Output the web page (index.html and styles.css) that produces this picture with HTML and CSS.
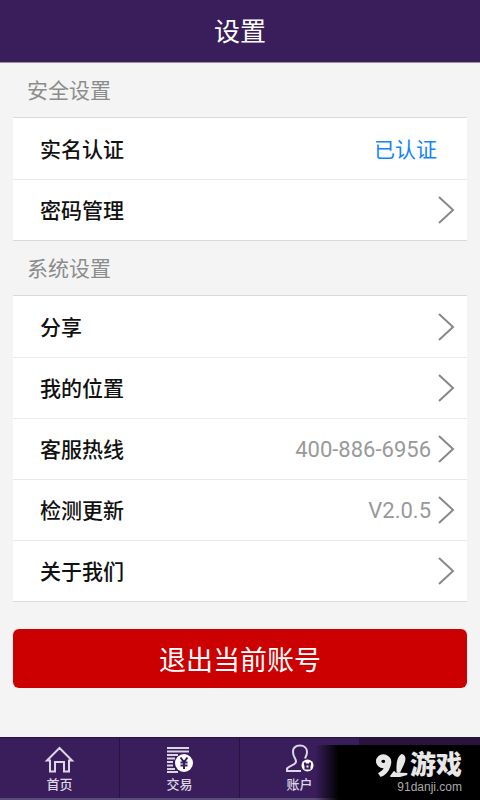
FILE: index.html
```html
<!DOCTYPE html>
<html lang="zh-CN">
<head>
<meta charset="utf-8">
<meta name="viewport" content="width=device-width, initial-scale=1">
<title>设置</title>
<link rel="stylesheet" href="styles.css">
</head>
<body>
<header class="topbar"><h1>设置</h1></header>
<main class="content">
  <h2 class="section">安全设置</h2>
  <ul class="group">
    <li><a class="row" href="#verify"><span class="label">实名认证</span><span class="status">已认证</span></a></li>
    <li><a class="row" href="#password"><span class="label">密码管理</span><svg class="chevron" viewBox="0 0 18 30"><path d="M2 2 16 15 2 28"/></svg></a></li>
  </ul>
  <h2 class="section">系统设置</h2>
  <ul class="group">
    <li><a class="row" href="#share"><span class="label">分享</span><svg class="chevron" viewBox="0 0 18 30"><path d="M2 2 16 15 2 28"/></svg></a></li>
    <li><a class="row" href="#location"><span class="label">我的位置</span><svg class="chevron" viewBox="0 0 18 30"><path d="M2 2 16 15 2 28"/></svg></a></li>
    <li><a class="row" href="#hotline"><span class="label">客服热线</span><span class="value">400-886-6956</span><svg class="chevron" viewBox="0 0 18 30"><path d="M2 2 16 15 2 28"/></svg></a></li>
    <li><a class="row" href="#update"><span class="label">检测更新</span><span class="value">V2.0.5</span><svg class="chevron" viewBox="0 0 18 30"><path d="M2 2 16 15 2 28"/></svg></a></li>
    <li><a class="row" href="#about"><span class="label">关于我们</span><svg class="chevron" viewBox="0 0 18 30"><path d="M2 2 16 15 2 28"/></svg></a></li>
  </ul>
  <button class="logout" type="button">退出当前账号</button>
</main>
<nav class="tabs">
  <a class="tab" href="#home">
    <svg class="icon" viewBox="0 0 30 30"><path d="M2 15.500 14.500 3 27 15.500H24V26.500H19V17H10V26.500H5V15.500Z"/></svg>
    <span>首页</span>
  </a>
  <a class="tab" href="#trade">
    <svg class="icon" viewBox="0 0 30 30"><path d="M2 3H24M2 6.500H24M2 10H13M2 13.500H10M2 17H8M2 20.500H8M2 24H10M2 27H13"/><circle class="solid" cx="19" cy="18" r="9"/><path class="yen" d="M15.500 12.500 19 17 22.500 12.500M19 17V24M15.500 17.500H22.500M15.500 20.500H22.500"/></svg>
    <span>交易</span>
  </a>
  <a class="tab" href="#account">
    <svg class="icon" viewBox="0 0 30 30"><path d="M16 26H2V23.500C5 20 11 20 11 16.500C11 13 8 12 8 7C8 2.500 11 0.500 15 0.500S22 3 22 7C22 10 21 11 20 13.500"/><circle class="solid" cx="22.500" cy="20.500" r="6"/><path class="yen" d="M20 17.500V19.500M25 17.500V19.500M19 19.500H26M20.500 20V23.500H24.500V20"/></svg>
    <span>账户</span>
  </a>
  <a class="tab tab-more" href="#more" aria-label="更多"></a>
  <div class="watermark">
    <div class="brand"><svg class="mark" viewBox="0 0 96 69" role="img" aria-label="91"><ellipse class="loop" cx="22" cy="22" rx="14" ry="13"/><path class="stem" d="M30 6C48 8 48 26 43 38C37 54 28 64 14 69L6 58C18 52 24 44 27 34Z"/><path class="stem" d="M78 0C92 4 90 20 82 35L72 56H62C60 34 62 6 78 0Z"/><path class="stem" d="M42 66 54 50 60 56H78L94 57V63L72 69H44Z"/></svg><strong>游戏</strong></div>
    <div class="site">91danji.com</div>
  </div>
</nav>
</body>
</html>
```
FILE: styles.css
```css
* { box-sizing: border-box; }
body {
  margin: 0;
  min-height: 100vh;
  display: flex;
  flex-direction: column;
  background: #f4f4f4;
  color: #111;
  font-family: Roboto, "Noto Sans CJK SC", sans-serif;
}
a { color: inherit; text-decoration: none; }
.topbar {
  height: 63px;
  padding-top: 2px;
  background: #391e5b;
  border-bottom: 1px solid #9c8fae;
  color: #fff;
  display: flex;
  align-items: center;
  justify-content: center;
}
h1 { margin: 0; font-size: 26px; font-weight: 400; line-height: 32px; }
.content { flex: 1; padding: 0 13px; }
.section {
  margin: 0;
  height: 54px;
  padding: 0 14px 2px;
  display: flex;
  align-items: center;
  font-size: 21px;
  font-weight: 400;
  color: #8c8c8c;
}
.group {
  margin: 0;
  padding: 0;
  list-style: none;
  background: #fff;
  border-top: 1px solid #dcdad4;
  border-bottom: 1px solid #dcdad4;
}
.group li { height: 61px; }
.group li + li { border-top: 1px solid #ebe8e5; }
.row {
  height: 100%;
  padding: 0 12px 0 27px;
  display: flex;
  align-items: center;
  font-size: 21px;
}
.label { flex: 1; padding-bottom: 2px; font-weight: 500; }
.status { padding: 0 18px 2px 0; color: #0f85f9; }
.value { padding-right: 6px; font-size: 22px; color: #999; }
.chevron { width: 18px; height: 30px; fill: none; stroke: #888; stroke-width: 2; }
.logout {
  display: block;
  width: 100%;
  height: 59px;
  margin-top: 27px;
  padding: 0;
  border: 0;
  border-radius: 6px;
  background: #c00;
  color: #fff;
  font: inherit;
  font-size: 27px;
}
.tabs {
  position: relative;
  height: 63px;
  display: grid;
  grid-template-columns: repeat(4, 1fr);
  background: #391e5b;
  border-top: 1px solid #27143f;
  border-bottom: 2px solid #5b4b78;
}
.tab {
  padding-top: 7px;
  display: flex;
  flex-direction: column;
  align-items: center;
  gap: 1px;
  color: #ddd6e4;
  font-size: 13px;
  font-weight: 500;
  line-height: 18px;
  border-right: 1px solid #27143f;
}
.tab-more { background: #28143f; }
.icon { width: 30px; height: 30px; overflow: visible; fill: none; stroke: #ddd6e4; stroke-width: 2; }
.icon .solid { fill: #fff; stroke: none; }
.icon .yen { stroke: #391e5b; }
.watermark {
  position: absolute;
  top: 7px;
  right: 0;
  bottom: -2px;
  width: 165px;
  padding: 5px 18px 0 0;
  background: linear-gradient(to right, transparent, #000 24px);
  color: #e8e8e8;
  text-align: right;
}
.brand { display: flex; justify-content: flex-end; align-items: center; gap: 2px; font-size: 26px; line-height: 30px; }
.brand strong { font-weight: 900; }
.mark { width: 32px; height: 23px; fill: none; }
.loop { stroke: #e8e8e8; stroke-width: 16; }
.stem { fill: #e8e8e8; }
.site { font-family: "Liberation Sans", sans-serif; font-size: 12px; line-height: 14px; color: #aaa; }
```
